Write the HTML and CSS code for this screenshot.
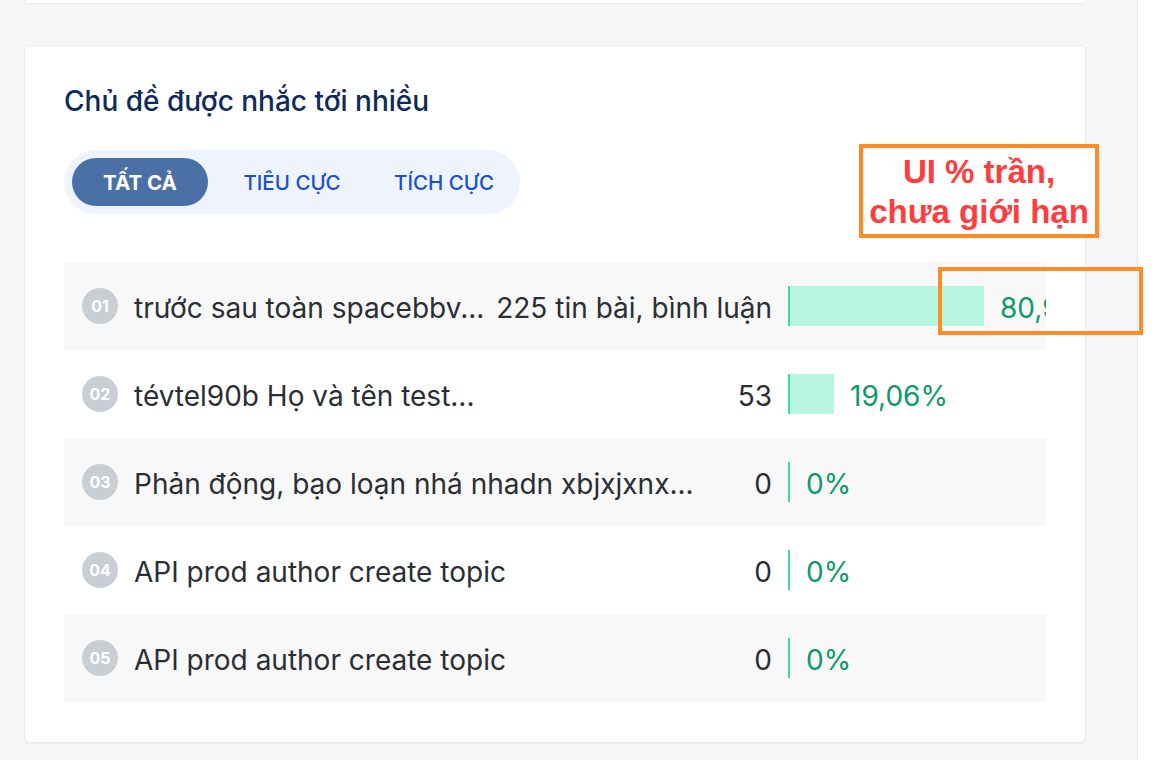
FILE: index.html
```html
<!DOCTYPE html>
<html lang="vi">
<head>
<meta charset="utf-8">
<title>Chủ đề được nhắc tới nhiều</title>
<link rel="stylesheet" href="styles.css">
</head>
<body>
<div class="page">
  <main class="main">
    <div class="card-stub"></div>
    <section class="card">
      <h2 class="title">Chủ đề được nhắc tới nhiều</h2>
      <div class="tabs">
        <button class="tab active">TẤT CẢ</button>
        <button class="tab">TIÊU CỰC</button>
        <button class="tab">TÍCH CỰC</button>
      </div>
      <ul class="list">
        <li class="row">
          <span class="rank">01</span>
          <span class="name">trước sau toàn spacebbv...</span>
          <span class="count">225 tin bài, bình luận</span>
          <span class="stat"><span class="fill" style="width:196px"></span><span class="pct">80,94%</span></span>
        </li>
        <li class="row">
          <span class="rank">02</span>
          <span class="name">tévtel90b Họ và tên test...</span>
          <span class="count">53</span>
          <span class="stat"><span class="fill" style="width:46px"></span><span class="pct">19,06%</span></span>
        </li>
        <li class="row">
          <span class="rank">03</span>
          <span class="name">Phản động, bạo loạn nhá nhadn xbjxjxnx...</span>
          <span class="count">0</span>
          <span class="stat"><span class="fill" style="width:2px"></span><span class="pct">0%</span></span>
        </li>
        <li class="row">
          <span class="rank">04</span>
          <span class="name">API prod author create topic</span>
          <span class="count">0</span>
          <span class="stat"><span class="fill" style="width:2px"></span><span class="pct">0%</span></span>
        </li>
        <li class="row">
          <span class="rank">05</span>
          <span class="name">API prod author create topic</span>
          <span class="count">0</span>
          <span class="stat"><span class="fill" style="width:2px"></span><span class="pct">0%</span></span>
        </li>
      </ul>
    </section>
  </main>
  <aside class="aside"></aside>
  <div class="note note-text">UI % trần,<br>chưa giới hạn</div>
  <div class="note note-box"></div>
</div>
</body>
</html>
```
FILE: styles.css
```css
* { box-sizing: border-box; }
html, body { margin: 0; padding: 0; }
body {
  font-family: Inter, "Noto Sans", "Liberation Sans", sans-serif;
  background: #ffffff;
  color: #2a2e35;
}
.page {
  position: relative;
  display: flex;
  width: 1174px;
  height: 760px;
  overflow: hidden;
}
.main {
  flex: none;
  width: 1138px;
  background: #f5f6f8;
  border-right: 1px solid #e7e9ec;
  padding: 0 51px 0 24px;
}
.aside { flex: 1; background: #ffffff; }
.card-stub {
  height: 4px;
  background: #ffffff;
  border: 1px solid #e8ebef;
  border-top: none;
  border-radius: 0 0 6px 6px;
}
.card {
  margin-top: 41px;
  background: #ffffff;
  border: 1px solid #e8ebef;
  border-radius: 6px;
  box-shadow: 0 1px 1px rgba(20, 40, 80, 0.04);
  padding: 39px 39px 40px 39px;
}
.title {
  margin: 0;
  font-size: 28px;
  line-height: 32px;
  font-weight: 500;
  color: #0e2a5c;
}
.tabs {
  display: inline-flex;
  gap: 16px;
  margin-top: 33px;
  padding: 8px;
  background: #eff3fb;
  border-radius: 32px;
}
.tab {
  width: 136px;
  height: 48px;
  border: none;
  border-radius: 24px;
  background: transparent;
  font-family: inherit;
  font-size: 20.5px;
  font-weight: 500;
  color: #1a4fd4;
  padding: 0;
}
.tab.active {
  background: #4a70a5;
  color: #ffffff;
  font-weight: 700;
}
.list {
  list-style: none;
  margin: 48px 0 0 0;
  padding: 0;
}
.row {
  display: flex;
  align-items: center;
  height: 88px;
  padding-left: 18px;
  overflow: hidden;
}
.row:nth-child(odd) { background: #f8f8f8; }
.rank {
  flex: none;
  width: 36px;
  height: 36px;
  border-radius: 50%;
  background: #c9ced5;
  color: #ffffff;
  font-size: 16px;
  font-weight: 700;
  display: flex;
  align-items: center;
  justify-content: center;
}
.name {
  flex: 0 1 auto;
  min-width: 0;
  margin-left: 16px;
  padding-top: 4px;
  font-size: 28px;
  white-space: nowrap;
  overflow: hidden;
  color: #2a2e35;
}
.count {
  flex: none;
  margin-left: auto;
  padding-left: 9px;
  padding-top: 4px;
  font-size: 28px;
  white-space: nowrap;
  color: #2a2e35;
}
.stat {
  flex: none;
  width: 258px;
  margin-left: 16px;
  display: flex;
  align-items: center;
  overflow: hidden;
}
.fill {
  flex: none;
  height: 40px;
  background: #b8f6e2;
  border-left: 2px solid #3fd8a0;
}
.pct {
  flex: none;
  margin-left: 16px;
  padding-top: 4px;
  font-size: 28px;
  white-space: nowrap;
  color: #0c9a6b;
}
.note {
  position: absolute;
  border: 4px solid #ff8b26;
}
.note-text {
  left: 859px;
  top: 144px;
  width: 240px;
  height: 94px;
  padding-top: 4px;
  text-align: center;
  font-family: "Liberation Sans", Arial, sans-serif;
  font-weight: 700;
  font-size: 33px;
  line-height: 40px;
  color: #ff3d3d;
  background: #ffffff;
}
.note-box {
  left: 938px;
  top: 267px;
  width: 205px;
  height: 68px;
}
```
